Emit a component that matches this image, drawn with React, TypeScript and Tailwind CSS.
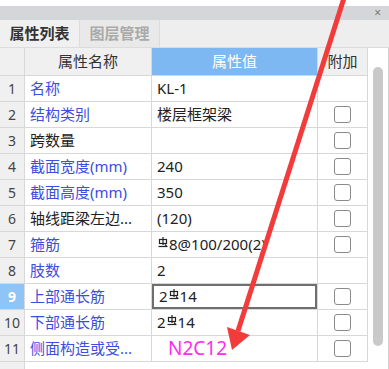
import React from "react";

const rows = [
  { n: "1", name: "名称", blue: true, value: "KL-1", check: false },
  { n: "2", name: "结构类别", blue: true, value: "楼层框架梁", check: true },
  { n: "3", name: "跨数量", blue: false, value: "", check: true },
  { n: "4", name: "截面宽度(mm)", blue: true, value: "240", check: true },
  { n: "5", name: "截面高度(mm)", blue: true, value: "350", check: true },
  { n: "6", name: "轴线距梁左边...", blue: false, value: "(120)", check: true },
  { n: "7", name: "箍筋", blue: true, value: "rebar8@100/200(2)", check: true },
  { n: "8", name: "肢数", blue: true, value: "2", check: false },
  { n: "9", name: "上部通长筋", blue: true, value: "2rebar14", check: true },
  { n: "10", name: "下部通长筋", blue: true, value: "2rebar14", check: true },
  { n: "11", name: "侧面构造或受...", blue: true, value: "N2C12", check: true },
];

// 三级钢符号
function Rebar() {
  return (
    <svg width="10" height="11" viewBox="0 0 10 11" className="inline-block -mt-[8px] mx-[1px]">
      <g stroke="#222" strokeWidth="1.2" fill="none">
        <line x1="5" y1="0" x2="5" y2="8" />
        <rect x="1.5" y="2.5" width="7" height="4" />
        <line x1="0.5" y1="9.5" x2="9.5" y2="9.5" />
        <line x1="7" y1="7.5" x2="8.5" y2="9" />
      </g>
    </svg>
  );
}

function Value({ v }: { v: string }) {
  if (v === "N2C12") {
    return <span className="ml-[11px] text-[19px] text-[#ff2cf0] leading-none">N2C12</span>;
  }
  const parts = v.split("rebar");
  return (
    <span>
      {parts.map((p, i) => (
        <React.Fragment key={i}>
          {i > 0 && <Rebar />}
          {p}
        </React.Fragment>
      ))}
    </span>
  );
}

export default function App() {
  return (
    <div
      className="relative w-[389px] h-[369px] overflow-hidden bg-white text-[15px] text-[#222]"
      style={{ fontFamily: '"Noto Sans", "Noto Sans CJK SC", sans-serif' }}
    >
      <div className="h-[6px] bg-white" />
      <div className="h-[14px] bg-[#d5d6da] flex items-center justify-end pr-[8px]">
        <span className="text-[12px] leading-none text-[#777]">×</span>
      </div>
      <div className="h-[28px] bg-[#eeeeee] flex border-b border-[#dcdcdc]">
        <div className="w-[79px] flex items-center justify-center font-bold text-[#333] bg-[#f0f0f0]">属性列表</div>
        <div className="w-[81px] flex items-center justify-center font-bold text-[#aaaaaa] bg-[#e9e9e9] border-x border-[#dcdcdc]">
          图层管理
        </div>
      </div>

      <div className="flex">
        <div className="w-[368px]">
          <div className="flex h-[28px] border-b border-[#d8d8d8] text-[#333]">
            <div className="w-[25px] bg-[#f0f0f0] border-r border-[#d8d8d8]" />
            <div className="w-[127px] bg-[#f0f0f0] border-r border-[#d8d8d8] flex items-center justify-center">属性名称</div>
            <div className="w-[165px] bg-[#7db8f2] flex items-center justify-center text-white">属性值</div>
            <div className="w-[51px] bg-[#f0f0f0] border-x border-[#d8d8d8] flex items-center justify-center">附加</div>
          </div>
          {rows.map((r) => {
            const sel = r.n === "9";
            return (
              <div key={r.n} className="flex h-[26px] border-b border-[#d8d8d8]">
                <div
                  className={`w-[25px] border-r border-[#d8d8d8] flex items-center justify-center text-[14px] ${
                    sel ? "bg-[#8fc4f6] text-white font-bold" : "bg-[#f0f0f0] text-[#444]"
                  }`}
                >
                  {r.n}
                </div>
                <div
                  className={`w-[127px] border-r border-[#d8d8d8] flex items-center pl-[5px] whitespace-nowrap ${
                    r.blue ? "text-[#3b4ee0]" : "text-[#222]"
                  }`}
                >
                  {r.name}
                </div>
                <div
                  className={`w-[165px] flex items-center pl-[5px] whitespace-nowrap ${
                    sel ? "border-2 border-[#6e6e6e] pl-[3px]" : ""
                  }`}
                >
                  <Value v={r.value} />
                </div>
                <div className="w-[51px] border-x border-[#d8d8d8] flex items-center justify-center">
                  {r.check && <div className="w-[17px] h-[17px] rounded-[3px] border border-[#8a8a8a] bg-white" />}
                </div>
              </div>
            );
          })}
          <div className="flex h-[8px]">
            <div className="w-[25px] bg-[#f0f0f0] border-r border-[#d8d8d8]" />
          </div>
        </div>
        <div className="w-[21px] border-r border-[#cfcfcf] bg-white pt-[19px] pl-[5px]">
          <div className="w-[10px] h-[279px] rounded-full bg-[#c9c9c9]" />
        </div>
      </div>

      <svg className="absolute inset-0 pointer-events-none" width="389" height="369">
        <line x1="344" y1="-2" x2="238" y2="331" stroke="#f23b3b" strokeWidth="5" />
        <polygon points="232,350 227,327 250,335" fill="#f23b3b" />
      </svg>
    </div>
  );
}
